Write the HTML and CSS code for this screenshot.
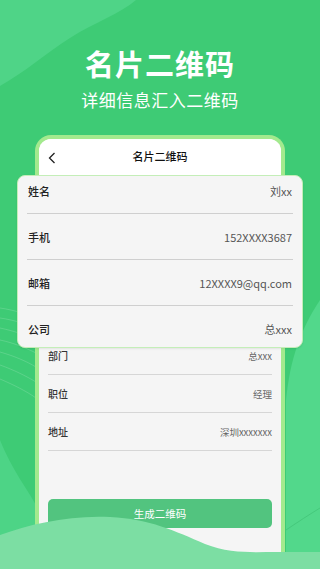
FILE: index.html
```html
<!DOCTYPE html>
<html lang="zh">
<head>
<meta charset="utf-8">
<title>名片二维码</title>
<link rel="stylesheet" href="styles.css">
</head>
<body>
<div class="screen">
  <svg class="bg" width="320" height="569" viewBox="0 0 320 569">
    <path d="M0 0 H136 C120 14 95 22 70 38 C45 54 25 72 0 86 Z" fill="#4fd487"/>
    <path d="M320 300 C300 330 290 360 286 400 L286 569 H320 Z" fill="#52d88b"/>
    <path d="M0 440 C12 470 28 490 36 505 L36 569 H0 Z" fill="#4dd486"/>
    <g fill="none" stroke="#ffffff" stroke-opacity="0.22" stroke-width="0.7">
      <path d="M0 308 C14 310 26 314 36 318"/>
      <path d="M0 318 C14 320 26 324 36 328"/>
      <path d="M0 328 C14 331 26 335 36 340"/>
      <path d="M0 340 C14 343 26 348 36 353"/>
      <path d="M0 352 C14 356 26 361 36 367"/>
      <path d="M0 365 C14 370 26 376 36 382"/>
      <path d="M0 379 C14 385 26 391 36 398"/>
    </g>
    <path d="M286 530 C298 522 310 514 320 508" fill="none" stroke="#45c97c" stroke-width="1"/>
  </svg>

  <header class="hero">
    <h1 class="hero-title">名片二维码</h1>
    <p class="hero-sub">详细信息汇入二维码</p>
  </header>

  <section class="phone">
    <div class="phone-bar">
      <svg class="back" width="8" height="12" viewBox="0 0 8 12"><path d="M6.5 1 L1.5 6 L6.5 11" fill="none" stroke="#222" stroke-width="1.3"/></svg>
      <span class="phone-title">名片二维码</span>
    </div>

    <div class="card">
      <div class="card-row"><span class="c-label">姓名</span><span class="c-value">刘xx</span></div>
      <div class="card-row"><span class="c-label">手机</span><span class="c-value">152XXXX3687</span></div>
      <div class="card-row"><span class="c-label">邮箱</span><span class="c-value">12XXXX9@qq.com</span></div>
      <div class="card-row"><span class="c-label">公司</span><span class="c-value">总xxx</span></div>
    </div>

    <div class="list">
      <div class="list-row"><span class="l-label">部门</span><span class="l-value">总xxx</span></div>
      <div class="list-row"><span class="l-label">职位</span><span class="l-value">经理</span></div>
      <div class="list-row"><span class="l-label">地址</span><span class="l-value">深圳xxxxxxx</span></div>
    </div>

    <button class="gen-btn">生成二维码</button>
  </section>

  <svg class="wave" width="320" height="60" viewBox="0 0 320 60">
    <path d="M0 26 C30 15 70 6 110 8 C150 10 175 22 205 35 C230 45 255 43 275 43 L320 43 V60 H0 Z" fill="#7cdea3"/>
  </svg>
</div>
</body>
</html>
```

FILE: styles.css
```css
* { box-sizing: border-box; }
html, body { margin: 0; padding: 0; }
body {
  font-family: "Noto Sans CJK SC", "Noto Sans", sans-serif;
  background: #3ecb75;
}
.screen {
  position: relative;
  width: 320px;
  height: 569px;
  overflow: hidden;
  background: #3ecb75;
  display: flex;
  flex-direction: column;
}
.bg {
  position: absolute;
  left: 0;
  top: 0;
}
.hero {
  position: relative;
  text-align: center;
  color: #fff;
  padding-top: 44px;
  height: 135px;
}
.hero-title {
  margin: 0;
  font-size: 29px;
  line-height: 38px;
  font-weight: 700;
  letter-spacing: 1px;
}
.hero-sub {
  margin: 0;
  margin-top: 6px;
  font-size: 17px;
  line-height: 24px;
  font-weight: 400;
  letter-spacing: 0.5px;
}
.phone {
  position: relative;
  flex: 1;
  margin: 0 35px;
  border: 4px solid #a3ea8e;
  border-bottom: none;
  border-radius: 16px 16px 0 0;
  background: #f5f5f5;
  display: flex;
  flex-direction: column;
}
.phone-bar {
  position: relative;
  height: 36px;
  background: #fff;
  border-radius: 12px 12px 0 0;
  display: flex;
  align-items: center;
  justify-content: center;
}
.back {
  position: absolute;
  left: 9px;
  top: 13px;
}
.phone-title {
  font-size: 11px;
  font-weight: 500;
  color: #111;
  margin-top: -2px;
}
.card {
  margin: 0 -22px;
  background: #f5f5f5;
  border: 1.5px solid #c4eeb8;
  border-radius: 8px;
  padding: 0 9px;
  box-shadow: 0 1px 2px rgba(0,0,0,0.08);
}
.card-row {
  display: flex;
  justify-content: space-between;
  align-items: center;
  line-height: 20px;
  padding: 13px 1px 12px;
  border-bottom: 1px solid #cfcfcf;
  font-size: 11px;
}
.card-row:first-child { padding-top: 5px; }
.card-row:last-child { border-bottom: none; padding-bottom: 8px; }
.c-label { color: #222; font-weight: 500; }
.c-value { color: #555; }
.list {
  padding: 0 9px;
}
.list-row {
  display: flex;
  justify-content: space-between;
  align-items: center;
  line-height: 16px;
  padding: 11px 0 10px;
  border-bottom: 1px solid #d6d6d6;
  font-size: 10px;
}
.list-row:first-child { padding-top: 0; }
.l-label { color: #333; font-weight: 500; }
.l-value { color: #666; font-size: 9.5px; }
.gen-btn {
  margin: 48px 9px 0;
  height: 29px;
  border: none;
  border-radius: 5px;
  background: #52c47f;
  color: #fff;
  font-family: inherit;
  font-size: 10.5px;
  padding: 0;
}
.wave {
  position: absolute;
  left: 0;
  bottom: 0;
}
```
